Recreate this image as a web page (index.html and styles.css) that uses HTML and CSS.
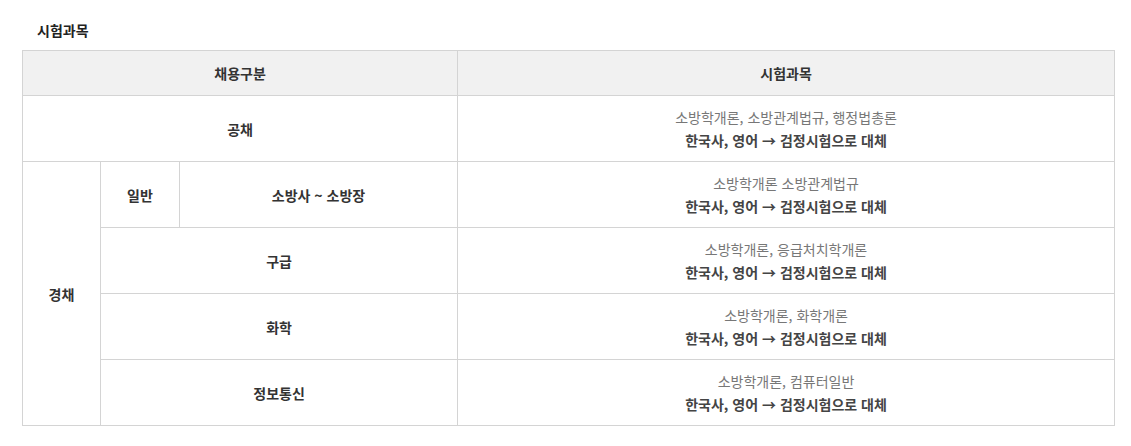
FILE: index.html
```html
<!DOCTYPE html>
<html lang="ko">
<head>
<meta charset="utf-8">
<link rel="stylesheet" href="styles.css">
</head>
<body>
<div class="wrap">
  <h3 class="title">시험과목</h3>
  <table class="exam">
    <colgroup>
      <col class="c1"><col class="c2"><col class="c3"><col class="c4">
    </colgroup>
    <thead>
      <tr><th colspan="3">채용구분</th><th>시험과목</th></tr>
    </thead>
    <tbody>
      <tr>
        <td colspan="3" class="bold">공채</td>
        <td class="subj"><span class="line">소방학개론, 소방관계법규, 행정법총론</span><span class="line strong">한국사, 영어 → 검정시험으로 대체</span></td>
      </tr>
      <tr>
        <td rowspan="4" class="bold">경채</td>
        <td class="bold">일반</td>
        <td class="bold">소방사 ~ 소방장</td>
        <td class="subj"><span class="line">소방학개론 소방관계법규</span><span class="line strong">한국사, 영어 → 검정시험으로 대체</span></td>
      </tr>
      <tr>
        <td colspan="2" class="bold">구급</td>
        <td class="subj"><span class="line">소방학개론, 응급처치학개론</span><span class="line strong">한국사, 영어 → 검정시험으로 대체</span></td>
      </tr>
      <tr>
        <td colspan="2" class="bold">화학</td>
        <td class="subj"><span class="line">소방학개론, 화학개론</span><span class="line strong">한국사, 영어 → 검정시험으로 대체</span></td>
      </tr>
      <tr>
        <td colspan="2" class="bold">정보통신</td>
        <td class="subj"><span class="line">소방학개론, 컴퓨터일반</span><span class="line strong">한국사, 영어 → 검정시험으로 대체</span></td>
      </tr>
    </tbody>
  </table>
</div>
</body>
</html>
```

FILE: styles.css
```css
html, body {
  margin: 0;
  padding: 0;
  background: #fff;
}
body {
  font-family: "Noto Sans CJK KR", "Noto Sans", sans-serif;
  color: #333;
  font-size: 14px;
}
.wrap {
  padding: 20px 0 0 22px;
}
.title {
  margin: 0 0 9px 15px;
  font-size: 14px;
  font-weight: 700;
  line-height: 21px;
  color: #222;
}
.exam {
  border-collapse: collapse;
  table-layout: fixed;
  width: 1092px;
  border-top: 1px solid #aaa;
  border-left: 1px solid #aaa;
  border-right: 1px solid #aaa;
}
.c1 { width: 78px; }
.c2 { width: 79px; }
.c3 { width: 278px; }
.c4 { width: 657px; }
.exam th,
.exam td {
  border: 1px solid #d4d4d4;
  text-align: center;
  vertical-align: middle;
  padding: 0;
}
.exam th {
  background: #f1f1f1;
  height: 44px;
  font-weight: 700;
  color: #333;
}
.exam td {
  height: 65px;
}
.bold {
  font-weight: 700;
  color: #333;
}
.subj .line {
  display: block;
  line-height: 23px;
  color: #777;
}
.subj .strong {
  font-weight: 700;
  color: #444;
}
```
